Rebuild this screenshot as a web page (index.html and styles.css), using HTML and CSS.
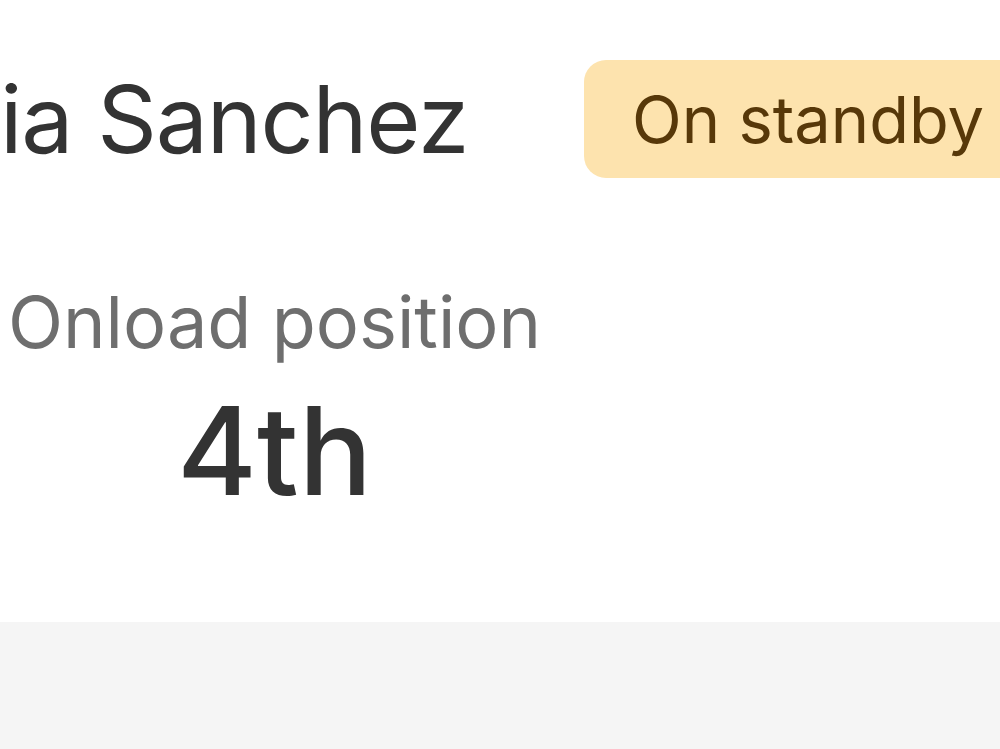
FILE: index.html
```html
<!DOCTYPE html>
<html lang="en">
<head>
    <meta charset="UTF-8">
    <meta name="viewport" content="width=device-width, initial-scale=1.0">
    <title>Driver</title>
    <link rel="stylesheet" href="styles.css">
</head>
<body>
    <div class="card">
        <div class="header">
            <h1 class="name">ia Sanchez</h1>
            <span class="badge">On standby</span>
        </div>
        <div class="stat">
            <div class="stat-label">Onload position</div>
            <div class="stat-value">4th</div>
        </div>
    </div>
    <div class="footer"></div>
</body>
</html>
```

FILE: styles.css
```css
html, body {
    margin: 0;
    padding: 0;
    height: 100%;
    overflow: hidden;
}
body {
    font-family: Inter, "Noto Sans", sans-serif;
    background-color: #f5f5f5;
}
.card {
    background-color: #fff;
    height: 622px;
    padding-top: 60px;
    box-sizing: border-box;
}
.header {
    display: flex;
    align-items: center;
    gap: 116px;
    white-space: nowrap;
}
.name {
    margin: 0;
    font-size: 93px;
    font-weight: 400;
    color: #333;
    letter-spacing: -1.2px;
}
.badge {
    display: inline-flex;
    align-items: center;
    height: 118px;
    padding: 0 40px 0 48px;
    background-color: #fde3ae;
    border-radius: 22px;
    color: #573809;
    font-size: 65px;
}
.stat {
    display: inline-flex;
    flex-direction: column;
    align-items: center;
    margin-top: 100px;
    padding-left: 8px;
}
.stat-label {
    font-size: 72px;
    color: #6e6e6e;
}
.stat-value {
    margin-top: 12px;
    font-size: 122px;
    color: #333;
    font-weight: 500;
}
```
